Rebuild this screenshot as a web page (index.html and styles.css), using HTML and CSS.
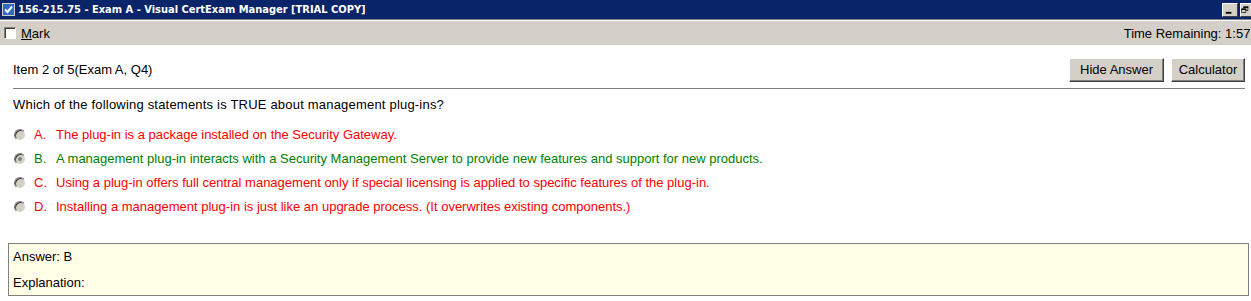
FILE: index.html
```html
<!DOCTYPE html>
<html>
<head>
<meta charset="utf-8">
<link rel="stylesheet" href="styles.css">
</head>
<body>
<div class="titlebar">
  <span class="tick"><svg width="13" height="13" viewBox="0 0 13 13"><rect x="0.5" y="0.5" width="12" height="12" fill="#fff" stroke="#d4d0c8"/><rect x="1" y="1" width="11" height="11" fill="#316ac5"/><path d="M3 6.5 L5.5 9 L10 3.5" stroke="#fff" stroke-width="2" fill="none"/></svg></span>
  <span class="title">156-215.75 - Exam A - Visual CertExam Manager [TRIAL COPY]</span>
  <span class="spacer"></span>
  <span class="winbtn"><svg width="16" height="14" viewBox="0 0 16 14"><rect x="4" y="9" width="6" height="2" fill="#000"/></svg></span>
  <span class="winbtn cut"><svg width="16" height="14" viewBox="0 0 16 14"><rect x="5.5" y="2.5" width="6" height="5" fill="none" stroke="#000"/><rect x="5" y="2" width="7" height="2" fill="#000"/><rect x="2.5" y="5.5" width="6" height="5" fill="#d4d0c8" stroke="#000"/><rect x="2" y="5" width="7" height="2" fill="#000"/></svg></span>
</div>
<div class="toolbar">
  <span class="chk"></span>
  <span class="mark"><u>M</u>ark</span>
  <span class="spacer"></span>
  <span class="timer">Time Remaining: 1:57:</span>
</div>
<div class="content">
  <div class="itemrow">
    <span class="item">Item 2 of 5(Exam A, Q4)</span>
    <span class="spacer"></span>
    <button class="btn btn-hide">Hide Answer</button>
    <button class="btn btn-calc">Calculator</button>
  </div>
  <div class="rule"></div>
  <div class="question">Which of the following statements is TRUE about management plug-ins?</div>
  <div class="options">
    <div class="opt wrong"><span class="radio"></span><span class="letter">A.</span><span>The plug-in is a package installed on the Security Gateway.</span></div>
    <div class="opt right"><span class="radio sel"></span><span class="letter">B.</span><span>A management plug-in interacts with a Security Management Server to provide new features and support for new products.</span></div>
    <div class="opt wrong"><span class="radio"></span><span class="letter">C.</span><span>Using a plug-in offers full central management only if special licensing is applied to specific features of the plug-in.</span></div>
    <div class="opt wrong"><span class="radio"></span><span class="letter">D.</span><span>Installing a management plug-in is just like an upgrade process. (It overwrites existing components.)</span></div>
  </div>
</div>
<div class="answer">
  <div class="aline">Answer: B</div>
  <div class="aline">Explanation:</div>
</div>
</body>
</html>
```
FILE: styles.css
```css
html, body {
  margin: 0;
  padding: 0;
  background: #fff;
  font-family: "Liberation Sans", Arial, sans-serif;
  font-size: 13px;
  color: #000;
  overflow: hidden;
}
.titlebar {
  height: 20px;
  background: #0a246a;
  display: flex;
  align-items: center;
  border-bottom: 1px solid #808080;
  box-sizing: border-box;
}
.tick {
  width: 13px;
  height: 13px;
  margin-left: 2px;
  display: flex;
}
.title {
  margin-left: 3px;
  color: #fff;
  font-family: "DejaVu Sans Condensed", "DejaVu Sans", sans-serif;
  font-weight: bold;
  font-size: 11px;
}
.spacer { flex: 1; }
.winbtn {
  width: 16px;
  height: 14px;
  background: #d4d0c8;
  box-sizing: border-box;
  border-top: 1px solid #fff;
  border-left: 1px solid #fff;
  border-right: 1px solid #404040;
  border-bottom: 1px solid #404040;
  display: flex;
  margin-left: 2px;
  overflow: hidden;
}
.winbtn svg { margin: -1px 0 0 -1px; }
.winbtn.cut { width: 11px; border-right: none; }
.toolbar {
  height: 25px;
  background: #d4d0c8;
  display: flex;
  align-items: center;
  border-top: 1px solid #fff;
  box-sizing: border-box;
  overflow: hidden;
}
.chk {
  width: 12px;
  height: 12px;
  box-sizing: border-box;
  background: #fff;
  border-top: 1px solid #808080;
  border-left: 1px solid #808080;
  border-right: 1px solid #fff;
  border-bottom: 1px solid #fff;
  box-shadow: inset 1px 1px 0 #404040;
  margin-left: 4px;
}
.mark { margin-left: 5px; }
.timer { white-space: nowrap; margin-right: -3px; }
.content {
  padding: 0 6px 0 13px;
}
.itemrow {
  height: 43px;
  display: flex;
  align-items: center;
  padding-top: 6px;
  box-sizing: border-box;
}
.btn {
  font-family: "Liberation Sans", Arial, sans-serif;
  font-size: 13px;
  height: 24px;
  background: #d4d0c8;
  color: #000;
  box-sizing: border-box;
  border-top: 1px solid #fff;
  border-left: 1px solid #fff;
  border-right: 1px solid #404040;
  border-bottom: 1px solid #404040;
  box-shadow: inset -1px -1px 0 #808080;
  padding: 0;
  margin-left: 7px;
}
.btn-hide { width: 95px; }
.btn-calc { width: 74px; }
.rule {
  height: 1px;
  background: #808080;
}
.question {
  margin-top: 9px;
  height: 14px;
  line-height: 14px;
  letter-spacing: 0.2px;
}
.options {
  margin-top: 16px;
  display: flex;
  flex-direction: column;
  gap: 10px;
}
.opt {
  display: flex;
  align-items: center;
  height: 14px;
  line-height: 14px;
}
.wrong { color: #ff0000; }
.right { color: #008000; }
.radio {
  width: 12px;
  height: 12px;
  border-radius: 50%;
  box-sizing: border-box;
  background: #d4d0c8;
  border: 1px solid;
  border-color: #808080 #fff #fff #808080;
  box-shadow: inset 1px 1px 0 #404040;
  margin-left: 1px;
  position: relative;
}
.radio.sel::after {
  content: "";
  position: absolute;
  left: 3px;
  top: 3px;
  width: 4px;
  height: 4px;
  border-radius: 50%;
  background: #808080;
}
.letter {
  margin-left: 8px;
  width: 22px;
}
.answer {
  margin: 29px 2px 0 8px;
  height: 53px;
  background: #ffffe7;
  border: 1px solid #808080;
  box-sizing: border-box;
  padding: 6px 0 0 4px;
}
.aline {
  height: 26px;
  line-height: 14px;
}
```
